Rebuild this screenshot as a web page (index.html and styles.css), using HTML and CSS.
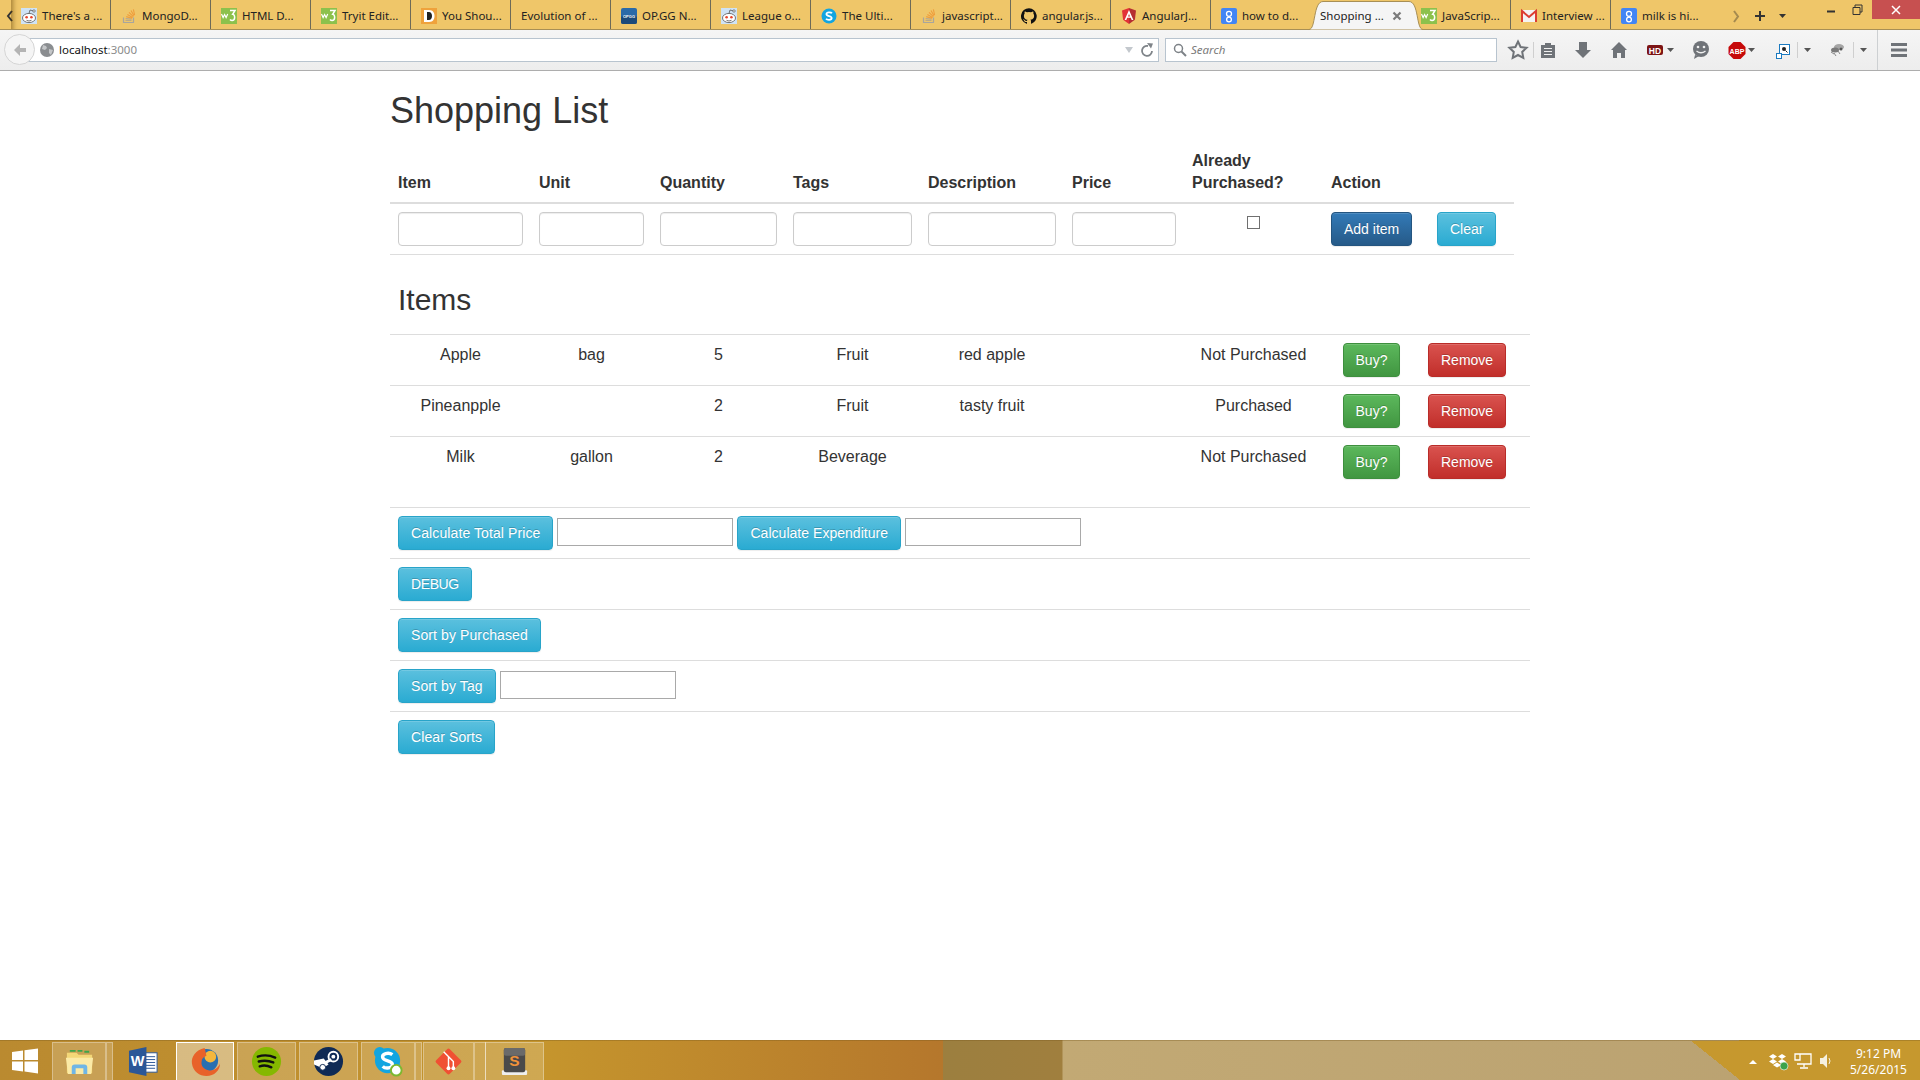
FILE: index.html
```html
<!DOCTYPE html>
<html lang="en">
<head>
  <meta charset="UTF-8">
  <title>Shopping List</title>
  <link rel="stylesheet" href="styles.css">
</head>
<body>
  <!-- favicons, reused with <use> -->
  <svg class="icon-defs" aria-hidden="true">
    <symbol id="fav-reddit" viewBox="0 0 16 16">
      <rect width="16" height="16" fill="#cfe3f5"/>
      <ellipse cx="8" cy="10" rx="6.5" ry="4.6" fill="#fff" stroke="#555" stroke-width=".8"/>
      <circle cx="5.6" cy="9.2" r="1.3" fill="#e8452c"/>
      <circle cx="10.4" cy="9.2" r="1.3" fill="#e8452c"/>
      <path d="M5.5 12.3q2.5 1.4 5 0" fill="none" stroke="#555" stroke-width=".8"/>
      <path d="M8 5.5 9 2l3 .8" fill="none" stroke="#555" stroke-width=".8"/>
      <circle cx="13" cy="3" r="1.2" fill="#fff" stroke="#555" stroke-width=".7"/>
    </symbol>
    <symbol id="fav-stack" viewBox="0 0 16 16">
      <path d="M2.5 9.5v5h10v-5" fill="none" stroke="#a9a59c" stroke-width="1.2"/>
      <path d="M4.5 12.5h6M4.6 10.6l6 .5" stroke="#b8a98c" stroke-width="1.1"/>
      <path d="M5.2 8.6l5.8 1.6M6.4 6.4l5.2 3M8 4.4l4.4 4.2M10 2.6l3 5.2M12.4 1.4l1.2 5.6" stroke="#ef9d3c" stroke-width="1.1"/>
    </symbol>
    <symbol id="fav-w3" viewBox="0 0 16 16">
      <rect width="16" height="16" fill="#8cc14c"/>
      <path d="M.5 6l1.600 3.500 1.500-3 1.500 3L6.700 6" fill="none" stroke="#fff" stroke-width="1.200"/>
      <path d="M9 2.500h5l-2.300 3.800c2.600 0 2.800 6.200-.6 6.200-1 0-1.600-.4-2.100-1" fill="none" stroke="#fff" stroke-width="1.500"/>
    </symbol>
    <symbol id="fav-d" viewBox="0 0 16 16">
      <rect width="16" height="16" fill="#efa23c"/>
      <path d="M3 2h5c4 0 5.500 3 5.500 6s-1.500 6-5.500 6H3z" fill="#fff"/>
      <path d="M6 4v8h2c2 0 3-1.800 3-4s-1-4-3-4z" fill="#222"/>
    </symbol>
    <symbol id="fav-skype" viewBox="0 0 16 16">
      <circle cx="8" cy="8" r="7.500" fill="#12a5e0"/>
      <path d="M11 5.300C10 4 5.600 3.800 5.400 6c-.2 2.500 5.400 1.700 5.300 4.100-.1 2.200-4.600 2.100-5.700.600" fill="none" stroke="#fff" stroke-width="1.700"/>
    </symbol>
    <symbol id="fav-github" viewBox="0 0 16 16">
      <path fill="#111" d="M8 .2a8 8 0 0 0-2.500 15.600c.4.100.5-.2.500-.4v-1.400c-2.200.5-2.700-1-2.700-1-.4-.9-.9-1.200-.9-1.200-.7-.5.100-.5.100-.5.800.1 1.200.8 1.200.8.700 1.200 1.900.9 2.300.7.100-.5.300-.9.500-1.100-1.800-.2-3.600-.9-3.600-4 0-.9.300-1.600.8-2.100-.1-.2-.4-1 .1-2.100 0 0 .7-.2 2.200.8a7.600 7.600 0 0 1 4 0c1.500-1 2.200-.8 2.200-.8.400 1.100.2 1.900.1 2.100.5.600.8 1.300.8 2.100 0 3.100-1.900 3.700-3.700 3.900.3.300.6.700.6 1.500v2.200c0 .2.100.5.500.4A8 8 0 0 0 8 .2z"/>
    </symbol>
    <symbol id="fav-angular" viewBox="0 0 16 16">
      <path d="M8 0 1 2.500l1.100 9.300L8 16z" fill="#e23237"/>
      <path d="M8 0l7 2.500-1.100 9.300L8 16z" fill="#b52e31"/>
      <path d="M8 2 3.600 12h1.700l.9-2.200h3.600l.9 2.200h1.700zM7 8.400 8 6l1 2.400z" fill="#fff"/>
    </symbol>
    <symbol id="fav-google" viewBox="0 0 16 16">
      <rect width="16" height="16" rx="2" fill="#4285f4"/>
      <circle cx="8" cy="5.800" r="2.500" fill="none" stroke="#fff" stroke-width="1.300"/>
      <circle cx="8" cy="11.500" r="2.400" fill="none" stroke="#fff" stroke-width="1.300"/>
    </symbol>
    <symbol id="fav-gmail" viewBox="0 0 16 16">
      <rect y="2" width="16" height="12" fill="#f4f4f4"/>
      <path d="M1 14V3l7 6 7-6v11" fill="none" stroke="#dc3e31" stroke-width="2"/>
    </symbol>
  </svg>

  <div class="screen">
    <header class="browser">
      <div class="tabbar">
        <svg class="tab-scroll" viewBox="0 0 8 12"><path d="M6 1 2 6l4 5" fill="none" stroke="#333" stroke-width="2"/></svg>
        <div class="tab"><svg class="fav"><use href="#fav-reddit"/></svg><span>There's a ...</span></div>
        <div class="tab"><svg class="fav"><use href="#fav-stack"/></svg><span>MongoD...</span></div>
        <div class="tab"><svg class="fav"><use href="#fav-w3"/></svg><span>HTML D...</span></div>
        <div class="tab"><svg class="fav"><use href="#fav-w3"/></svg><span>Tryit Edit...</span></div>
        <div class="tab"><svg class="fav"><use href="#fav-d"/></svg><span>You Shou...</span></div>
        <div class="tab"><span>Evolution of ...</span></div>
        <div class="tab">
          <svg class="fav" viewBox="0 0 16 16">
            <rect width="16" height="16" rx="2" fill="#2a6aa8"/>
            <rect y="8" width="16" height="8" rx="2" fill="#1c4a7a"/>
            <text x="8" y="9.800" text-anchor="middle" class="fav-tiny">OPGG</text>
          </svg>
          <span>OP.GG N...</span>
        </div>
        <div class="tab"><svg class="fav"><use href="#fav-reddit"/></svg><span>League o...</span></div>
        <div class="tab"><svg class="fav"><use href="#fav-skype"/></svg><span>The Ulti...</span></div>
        <div class="tab"><svg class="fav"><use href="#fav-stack"/></svg><span>javascript...</span></div>
        <div class="tab"><svg class="fav"><use href="#fav-github"/></svg><span>angular.js...</span></div>
        <div class="tab"><svg class="fav"><use href="#fav-angular"/></svg><span>AngularJ...</span></div>
        <div class="tab tab-before-active"><svg class="fav"><use href="#fav-google"/></svg><span>how to d...</span></div>
        <div class="tab tab-active">
          <svg class="tab-shape" viewBox="0 0 114 30"><path d="M0 29.500C7 29.500 4 1.500 14 1.500H100C110 1.500 107 29.500 114 29.500" fill="#f5f5f5" stroke="#a88f55"/></svg>
          <span>Shopping ...</span>
          <svg class="tab-close" viewBox="0 0 10 10"><path d="M1.500 1.500l7 7M8.500 1.500l-7 7" stroke="#7b7b7b" stroke-width="2.200"/></svg>
        </div>
        <div class="tab"><svg class="fav"><use href="#fav-w3"/></svg><span>JavaScrip...</span></div>
        <div class="tab"><svg class="fav"><use href="#fav-gmail"/></svg><span>Interview ...</span></div>
        <div class="tab tab-last"><svg class="fav"><use href="#fav-google"/></svg><span>milk is hi...</span></div>
        <svg class="tab-tools" viewBox="0 0 209 30">
          <path d="M23 11l4 5.500-4 5.500" fill="none" stroke="#a58a4f" stroke-width="2"/>
          <path d="M49 11v10M44 16h10" stroke="#333" stroke-width="2"/>
          <path d="M68 14h7l-3.500 4z" fill="#333"/>
          <path d="M116 11.500h8" stroke="#333" stroke-width="2"/>
          <path d="M142 7.500h7v7h-7zM144 7.500V5h7v7h-2" fill="none" stroke="#333"/>
        </svg>
        <div class="win-close">
          <svg viewBox="0 0 10 10"><path d="M1 1l8 8M9 1l-8 8" stroke="#fff" stroke-width="1.500"/></svg>
        </div>
      </div>

      <div class="navbar">
        <div class="back-btn">
          <svg viewBox="0 0 16 16"><path d="M8 2 2 8l6 6v-4h6V6H8z" fill="#b4b4b4"/></svg>
        </div>
        <div class="urlbar">
          <svg class="globe" viewBox="0 0 14 14"><circle cx="7" cy="7" r="7" fill="#8a8d90"/><path d="M3 2l3 1 1 2-2 2-3-1zM9 6l4 1-2 5-2-2z" fill="#c4c6c8"/></svg>
          <span class="url-host">localhost</span><span class="url-port">:3000</span>
          <svg class="url-tools" viewBox="0 0 32 14">
            <path d="M3 4h8L7 10z" fill="#c3c8cd"/>
            <path d="M26 3a5 5 0 1 0 4 5" fill="none" stroke="#7f8489" stroke-width="1.800"/>
            <path d="M25 0l6 .5-2 5z" fill="#7f8489"/>
          </svg>
        </div>
        <div class="searchbar">
          <svg class="search-icon" viewBox="0 0 14 14"><circle cx="5.500" cy="5.500" r="4" fill="none" stroke="#7d8287" stroke-width="1.500"/><path d="M8.500 8.500 13 13" stroke="#7d8287" stroke-width="2"/></svg>
          <span>Search</span>
        </div>
        <svg class="toolbar" viewBox="0 0 420 40">
          <path d="M18 11.500l2.600 5.500 6 .8-4.400 4.100 1.100 6L18 25l-5.300 2.900 1.100-6-4.400-4.100 6-.8z" fill="none" stroke="#6f7378" stroke-width="2"/>
          <path d="M33.500 12v16" stroke="#cfcfcf"/>
          <path d="M41 15h4v-2h6v2h4v13H41z" fill="#6f7378"/>
          <path d="M44 18.500h8M44 21.500h8M44 24.500h8" stroke="#f0f0f0"/>
          <path d="M79 12h8v8h4l-8 8-8-8h4z" fill="#6f7378"/>
          <path d="M119 12l8 8h-2v8h-4v-5h-4v5h-4v-8h-2z" fill="#6f7378"/>
          <rect x="147" y="15" width="16" height="10" rx="2" fill="#7c1414"/>
          <text x="155" y="23.500" text-anchor="middle" class="tool-label">HD</text>
          <path d="M167 18h7l-3.500 4zM248 18h7l-3.500 4zM304 18h7l-3.500 4zM360 18h7l-3.500 4z" fill="#555"/>
          <circle cx="201" cy="19" r="8" fill="#6f7378"/>
          <path d="M195 25l-1 4 5-3z" fill="#6f7378"/>
          <circle cx="198" cy="17" r="1.300" fill="#f0f0f0"/>
          <circle cx="204" cy="17" r="1.300" fill="#f0f0f0"/>
          <path d="M196.500 21q4.500 3.500 9 0" fill="none" stroke="#f0f0f0" stroke-width="1.300"/>
          <path d="M233.500 12h7l5 5v7l-5 5h-7l-5-5v-7z" fill="#c60a0a"/>
          <text x="237" y="23.500" text-anchor="middle" class="tool-label tool-label-abp">ABP</text>
          <rect x="279.500" y="14.500" width="10" height="10" fill="#fff" stroke="#1b7ac0"/>
          <rect x="276.500" y="23.500" width="5" height="5" fill="#fff" stroke="#1b7ac0"/>
          <circle cx="284" cy="19" r="2" fill="#222"/>
          <path d="M285.500 20.500l2 2" stroke="#222"/>
          <path d="M297.500 12v16M353.500 12v16" stroke="#cfcfcf"/>
          <ellipse cx="339" cy="17" rx="5" ry="3" fill="#a5a5a5"/>
          <ellipse cx="335" cy="20" rx="4" ry="2.500" fill="#7a7a7a"/>
          <circle cx="341" cy="19" r="1.500" fill="#555"/>
          <path d="M331 22l3 2M334 23l2 3M338 21l2 3" stroke="#888"/>
          <path d="M377.500 0v40" stroke="#cdd0d2"/>
          <path d="M391 14.500h16M391 20h16M391 25.500h16" stroke="#6f7378" stroke-width="3"/>
        </svg>
      </div>
    </header>

    <main class="container">
      <h1>Shopping List</h1>

      <table class="table add-table">
        <colgroup>
          <col class="col-item"><col class="col-unit"><col class="col-qty"><col class="col-tags"><col class="col-desc"><col class="col-price"><col class="col-status"><col class="col-action"><col class="col-clear">
        </colgroup>
        <thead>
          <tr>
            <th>Item</th><th>Unit</th><th>Quantity</th><th>Tags</th><th>Description</th><th>Price</th><th>Already Purchased?</th><th>Action</th><th></th>
          </tr>
        </thead>
        <tbody>
          <tr>
            <td><input class="form-control" type="text"></td>
            <td><input class="form-control" type="text"></td>
            <td><input class="form-control" type="number"></td>
            <td><input class="form-control" type="text"></td>
            <td><input class="form-control" type="text"></td>
            <td><input class="form-control" type="number"></td>
            <td class="center"><input class="check" type="checkbox"></td>
            <td><button class="btn btn-primary">Add item</button></td>
            <td><button class="btn btn-info">Clear</button></td>
          </tr>
        </tbody>
      </table>

      <h2>Items</h2>

      <table class="table items-table">
        <colgroup>
          <col class="col-item"><col class="col-unit"><col class="col-qty"><col class="col-tags"><col class="col-desc"><col class="col-price"><col class="col-status"><col class="col-buy"><col class="col-remove"><col class="col-rest">
        </colgroup>
        <tbody>
          <tr>
            <td>Apple</td><td>bag</td><td>5</td><td>Fruit</td><td>red apple</td><td></td><td>Not Purchased</td>
            <td class="btn-cell"><button class="btn btn-success">Buy?</button></td>
            <td class="btn-cell"><button class="btn btn-danger">Remove</button></td><td></td>
          </tr>
          <tr>
            <td>Pineanpple</td><td></td><td>2</td><td>Fruit</td><td>tasty fruit</td><td></td><td>Purchased</td>
            <td class="btn-cell"><button class="btn btn-success">Buy?</button></td>
            <td class="btn-cell"><button class="btn btn-danger">Remove</button></td><td></td>
          </tr>
          <tr>
            <td>Milk</td><td>gallon</td><td>2</td><td>Beverage</td><td></td><td></td><td>Not Purchased</td>
            <td class="btn-cell"><button class="btn btn-success">Buy?</button></td>
            <td class="btn-cell"><button class="btn btn-danger">Remove</button></td><td></td>
          </tr>
        </tbody>
      </table>

      <div class="action-rows">
        <div class="action-row">
          <button class="btn btn-info">Calculate Total Price</button>
          <input class="plain-input" type="text">
          <button class="btn btn-info btn-tight">Calculate Expenditure</button>
          <input class="plain-input" type="text">
        </div>
        <div class="action-row"><button class="btn btn-info btn-debug">DEBUG</button></div>
        <div class="action-row"><button class="btn btn-info">Sort by Purchased</button></div>
        <div class="action-row">
          <button class="btn btn-info">Sort by Tag</button>
          <input class="plain-input" type="text">
        </div>
        <div class="action-row"><button class="btn btn-info">Clear Sorts</button></div>
      </div>
    </main>

    <footer class="taskbar">
      <div class="start-btn">
        <svg viewBox="0 0 26 26"><path d="M0 4l11-1.500V12H0zM12.500 2.300 26 .5V12H12.500zM0 13.500h11v10L0 22zM12.500 13.500H26V25.500l-13.500-1.900z" fill="#fff"/></svg>
      </div>
      <div class="task task-stacked">
        <svg viewBox="0 0 32 32">
          <path d="M3 7h10l2 2h14v19H3z" fill="#f3d777"/>
          <path d="M6 5h6M14 5h5M21 6h5" stroke-width="2" stroke="#3ea44a"/>
          <path d="M2 12h28l-2 17H4z" fill="#fbeaa6"/>
          <path d="M8 29v-7q0-3 3-3h10q3 0 3 3v7h-4v-6h-8v6z" fill="#6fb6e6"/>
        </svg>
      </div>
      <div class="task task-pinned">
        <svg viewBox="0 0 32 32">
          <rect x="14" y="7" width="16" height="20" fill="#fff" stroke="#2b5797"/>
          <path d="M17 11h11M17 14h11M17 17h11M17 20h11M17 23h11" stroke="#2b5797"/>
          <path d="M1 5 19 1v30L1 27z" fill="#2b5797"/>
          <text x="10" y="21" text-anchor="middle" class="task-letter">W</text>
        </svg>
      </div>
      <div class="task task-active">
        <svg viewBox="0 0 32 32">
          <circle cx="17" cy="15" r="12" fill="#2a6fb0"/>
          <circle cx="21" cy="11" r="6" fill="#f5b73c"/>
          <path d="M15 2C6 4 1 11 2 18c1 8 8 13 15 13 8 0 14-6 14-13-2 5-7 8-12 7-5-1-8-5-7-9 0-3 2-5 5-6-1-3-1-6-2-8z" fill="#e8622a"/>
        </svg>
      </div>
      <div class="task">
        <svg viewBox="0 0 32 32">
          <circle cx="16" cy="16" r="15" fill="#85b800"/>
          <path d="M7 11q9-3 18 1M8 16q8-2 15 1M9 21q6-2 12 1" fill="none" stroke="#111" stroke-width="2.500" stroke-linecap="round"/>
        </svg>
      </div>
      <div class="task">
        <svg viewBox="0 0 32 32">
          <circle cx="16" cy="16" r="15" fill="#0f2a55"/>
          <path d="M1 19l9 4 6-4-5-6-10 2z" fill="#fff"/>
          <circle cx="21" cy="11" r="5" fill="none" stroke="#fff" stroke-width="2"/>
          <circle cx="21" cy="11" r="2" fill="#fff"/>
          <circle cx="10" cy="22" r="3" fill="#fff" stroke="#0f2a55"/>
          <path d="M13 17l6-3" stroke="#fff" stroke-width="3"/>
        </svg>
      </div>
      <div class="task task-stacked">
        <svg viewBox="0 0 32 32">
          <circle cx="15" cy="15" r="13" fill="#12a5e0"/>
          <circle cx="7" cy="7" r="6" fill="#12a5e0"/>
          <circle cx="23" cy="23" r="6" fill="#12a5e0"/>
          <path d="M20 9C16 6 9 8 10 12c1 4 10 3 10 7 0 4-7 5-10 2" fill="none" stroke="#fff" stroke-width="3.500"/>
          <circle cx="24" cy="25" r="5.500" fill="#fff" stroke="#7cb82f" stroke-width="2"/>
        </svg>
      </div>
      <div class="task task-stacked-double">
        <svg viewBox="0 0 32 32">
          <rect x="6" y="6" width="20" height="20" rx="2" transform="rotate(45 16 16)" fill="#f05033"/>
          <path d="M11 6l10 10v6M16 11v11" fill="none" stroke="#fff" stroke-width="1.500"/>
          <circle cx="16" cy="23" r="2" fill="#fff"/>
          <circle cx="21" cy="23" r="2" fill="#fff"/>
        </svg>
      </div>
      <div class="task">
        <svg viewBox="0 0 32 32">
          <rect x="3" y="25" width="26" height="5" rx="1" fill="#eee"/>
          <rect x="5" y="2" width="22" height="25" rx="2" fill="#4a4a4a"/>
          <rect x="5" y="2" width="22" height="8" rx="2" fill="#6a6a6a"/>
          <text x="16" y="21" text-anchor="middle" class="task-letter task-letter-s">S</text>
        </svg>
      </div>

      <div class="tray">
        <svg class="tray-icons" viewBox="0 0 90 20">
          <path d="M1 13l4-4 4 4z" fill="#fff"/>
          <path d="M21 5.500l4-2.500 4 2.500-4 2.500zM30 5.500l4-2.500 4 2.500-4 2.500zM21 10.500l4-2.500 4 2.500-4 2.500zM30 10.500l4-2.500 4 2.500-4 2.500zM25 14l4-2.500 4 2.500-4 2.500z" fill="#fff"/>
          <circle cx="36" cy="15" r="4" fill="#3da34a" stroke="#fff" stroke-width=".6"/>
          <path d="M49 3h14v10h-14M47 3h5v6h-5zM56 13v3M52 17h8" fill="none" stroke="#fff" stroke-width="1.300"/>
          <path d="M72 7h3l4-4v14l-4-4h-3z" fill="#f5f0e0"/>
          <path d="M81 7q2 3 0 6" fill="none" stroke="#f5f0e0"/>
        </svg>
        <div class="clock">
          <span>9:12 PM</span>
          <span>5/26/2015</span>
        </div>
      </div>
    </footer>
  </div>
</body>
</html>
```

FILE: styles.css
```css
* {
  box-sizing: border-box;
}

body {
  margin: 0;
  font-family: "Liberation Sans", Arial, sans-serif;
  font-size: 16px;
  line-height: 1.42857;
  color: #333;
  background: #fff;
}

.icon-defs {
  position: absolute;
  width: 0;
  height: 0;
}

.fav-tiny {
  font: bold 4px "Liberation Sans", sans-serif;
  fill: #fff;
}

.screen {
  display: flex;
  flex-direction: column;
  height: 100vh;
  overflow: hidden;
}

/* browser chrome */
.browser {
  flex: none;
  height: 71px;
  font-family: "Noto Sans", sans-serif;
}

.tabbar {
  display: flex;
  height: 30px;
  padding-left: 11px;
  background: #efc669;
  border-bottom: 1px solid #a88f55;
  font-size: 11.5px;
  color: #222;
  position: relative;
}

.tab-scroll {
  position: absolute;
  left: 6px;
  top: 10px;
  width: 8px;
  height: 12px;
}

.tab {
  flex: none;
  display: flex;
  align-items: center;
  gap: 5px;
  width: 100px;
  height: 29px;
  padding: 3px 0 0 10px;
  border-right: 1px solid #6d6a58;
  white-space: nowrap;
  position: relative;
}

.tab:first-of-type {
  box-shadow: inset 8px 0 5px -6px rgba(90, 60, 0, 0.5);
}

.tab-before-active,
.tab-last {
  border-right: 0;
}

.fav {
  flex: none;
  width: 16px;
  height: 16px;
}

.tab-active {
  border-right: 0;
  padding-left: 9px;
  color: #222;
}

.tab-active > span {
  position: relative;
}

.tab-shape {
  position: absolute;
  left: -2px;
  top: 0;
  width: 114px;
  height: 30px;
}

.tab-close {
  position: absolute;
  left: 81px;
  top: 11px;
  width: 10px;
  height: 10px;
}

.tab-tools {
  position: absolute;
  left: 1711px;
  top: 0;
  width: 209px;
  height: 30px;
}

.win-close {
  position: absolute;
  right: 0;
  top: 0;
  width: 48px;
  height: 19px;
  display: flex;
  align-items: center;
  justify-content: center;
  background: #c75050;
}

.win-close svg {
  width: 10px;
  height: 10px;
}

.navbar {
  display: flex;
  align-items: center;
  height: 41px;
  padding-left: 20px;
  background: linear-gradient(#f5f5f5, #ededed);
  border-bottom: 1px solid #adadad;
  position: relative;
}

.back-btn {
  position: absolute;
  left: 4px;
  top: 4px;
  width: 31px;
  height: 31px;
  display: flex;
  align-items: center;
  justify-content: center;
  background: #f5f5f5;
  border: 1px solid #d5d5d5;
  border-radius: 50%;
  z-index: 1;
}

.back-btn svg {
  width: 16px;
  height: 16px;
}

.urlbar,
.searchbar {
  display: flex;
  align-items: center;
  height: 24px;
  background: #fff;
  border: 1px solid #b8c4cf;
}

.urlbar {
  width: 1139px;
  padding-left: 19px;
  font-size: 11.5px;
  color: #111;
}

.globe {
  width: 14px;
  height: 14px;
  margin-right: 5px;
}

.url-port {
  color: #8c8c8c;
}

.url-tools {
  width: 32px;
  height: 14px;
  margin-left: auto;
  margin-right: 4px;
}

.searchbar {
  width: 332px;
  margin-left: 6px;
  padding-left: 7px;
  font-size: 11.5px;
  font-style: italic;
  color: #7b7b7b;
}

.search-icon {
  width: 14px;
  height: 14px;
  margin-right: 4px;
}

.toolbar {
  width: 420px;
  height: 40px;
  margin-left: 3px;
  flex: none;
}

.tool-label {
  font: bold 8.5px "Liberation Sans", sans-serif;
  fill: #fff;
}

.tool-label-abp {
  font-size: 7px;
}

/* page */
.container {
  flex: 1;
  width: 1140px;
  margin: 0 auto;
}

h1 {
  margin: 20px 0 10px;
  font-size: 36px;
  font-weight: 500;
  line-height: 1.1;
}

h2 {
  margin: 28px 0 18px;
  padding-left: 8px;
  font-size: 30px;
  font-weight: 500;
  line-height: 1.1;
}

.table {
  table-layout: fixed;
  border-collapse: collapse;
}

.table th,
.table td {
  padding: 8px;
}

.table th {
  padding: 9px 8px 7px;
  text-align: left;
  vertical-align: bottom;
  border-bottom: 2px solid #ddd;
}

.table td {
  vertical-align: top;
}

.add-table {
  width: 1124px;
}

.add-table td {
  border-bottom: 1px solid #ddd;
}

.items-table {
  width: 1140px;
  margin-bottom: 20px;
}

.items-table td {
  padding-top: 9px;
  text-align: center;
  border-top: 1px solid #ddd;
}

.items-table td.btn-cell {
  padding-top: 8px;
}

.center {
  text-align: center;
}

.col-item { width: 141px; }
.col-unit { width: 121px; }
.col-qty { width: 133px; }
.col-tags { width: 135px; }
.col-desc { width: 144px; }
.col-price { width: 120px; }
.col-status { width: 139px; }
.col-action { width: 106px; }
.col-clear { width: 85px; }
.col-buy { width: 97px; }
.col-remove { width: 92px; }
.col-rest { width: 18px; }

.form-control {
  display: block;
  width: 100%;
  height: 34px;
  padding: 6px 12px;
  font-size: 14px;
  background: #fff;
  border: 1px solid #ccc;
  border-radius: 4px;
  box-shadow: inset 0 1px 1px rgba(0, 0, 0, 0.075);
}

.check {
  appearance: none;
  display: block;
  width: 13px;
  height: 13px;
  margin: 4px auto 0;
  background: #fff;
  border: 1px solid #707070;
}

.btn {
  display: inline-block;
  padding: 6px 12px;
  font-family: inherit;
  font-size: 14px;
  line-height: 20px;
  color: #fff;
  white-space: nowrap;
  border: 1px solid transparent;
  border-radius: 4px;
  text-shadow: 0 -1px 0 rgba(0, 0, 0, 0.2);
  box-shadow: inset 0 1px 0 rgba(255, 255, 255, 0.15), 0 1px 1px rgba(0, 0, 0, 0.075);
  cursor: pointer;
}

.btn-primary {
  background: linear-gradient(#337ab7, #265a88);
  border-color: #245580;
}

.btn-info {
  background: linear-gradient(#5bc0de, #2aabd2);
  border-color: #28a4c9;
}

.btn-success {
  background: linear-gradient(#5cb85c, #419641);
  border-color: #3e8f3e;
}

.btn-danger {
  background: linear-gradient(#d9534f, #c12e2a);
  border-color: #b92c28;
}

.action-row {
  display: flex;
  align-items: flex-start;
  gap: 4px;
  height: 51px;
  padding: 8px;
  border-top: 1px solid #ddd;
}

.action-row .btn {
  letter-spacing: 0.1px;
}

.action-row .btn-tight {
  letter-spacing: 0.03px;
}

.action-row .btn-debug {
  letter-spacing: -0.4px;
}

.plain-input {
  width: 176px;
  height: 28px;
  margin-top: 2px;
  background: #fff;
  border: 1px solid #a9a9a9;
}

/* windows taskbar */
.taskbar {
  flex: none;
  display: flex;
  height: 40px;
  padding-top: 1px;
  background:
    linear-gradient(38.66deg, transparent 1087px, #c6982e 1087px),
    linear-gradient(to right, #ba8a30 0, #c5952d 545px, #b5772c 943px, #9c7f3f 943px, #a07f3e 1062px, #c2a974 1063px, #b9a171 100%);
  border-top: 1px solid rgba(120, 90, 30, 0.35);
}

.start-btn {
  flex: none;
  width: 52px;
  display: flex;
  align-items: center;
  padding-left: 12px;
}

.start-btn svg {
  width: 26px;
  height: 26px;
}

.task {
  flex: none;
  display: flex;
  align-items: center;
  justify-content: center;
  width: 59px;
  height: 39px;
  margin-right: 3px;
  background: rgba(255, 255, 255, 0.18);
  border: 1px solid rgba(255, 255, 255, 0.32);
  position: relative;
}

.task svg {
  width: 31px;
  height: 31px;
}

.task-stacked {
  width: 54px;
  margin-right: 8px;
}

.task-stacked::after {
  content: "";
  position: absolute;
  left: 53px;
  top: -1px;
  width: 5px;
  height: 39px;
  background: rgba(255, 255, 255, 0.18);
  border: 1px solid rgba(255, 255, 255, 0.32);
}

.task-stacked-double {
  width: 51px;
  margin-right: 11px;
}

.task-stacked-double::after {
  content: "";
  position: absolute;
  left: 50px;
  top: -1px;
  width: 10px;
  height: 39px;
  background: rgba(255, 255, 255, 0.18);
  border: 1px solid rgba(255, 255, 255, 0.32);
}

.task-pinned {
  width: 59px;
  margin-right: 3px;
  background: none;
  border-color: transparent;
}

.task-active {
  width: 58px;
  background: rgba(255, 255, 255, 0.4);
  border: 1px solid #fff;
}

.task-letter {
  font: bold 15px "Liberation Sans", sans-serif;
  fill: #fff;
}

.task-letter-s {
  font-size: 16px;
  fill: #f0923a;
}

.tray {
  margin-left: auto;
  display: flex;
  align-items: center;
  color: #fff;
  font-family: "Noto Sans", sans-serif;
  font-size: 12px;
  line-height: 16px;
}

.tray-icons {
  width: 90px;
  height: 20px;
  margin-right: 5px;
}

.clock {
  display: flex;
  flex-direction: column;
  align-items: center;
  width: 71px;
  margin: 1px 6px 0 0;
}
```
